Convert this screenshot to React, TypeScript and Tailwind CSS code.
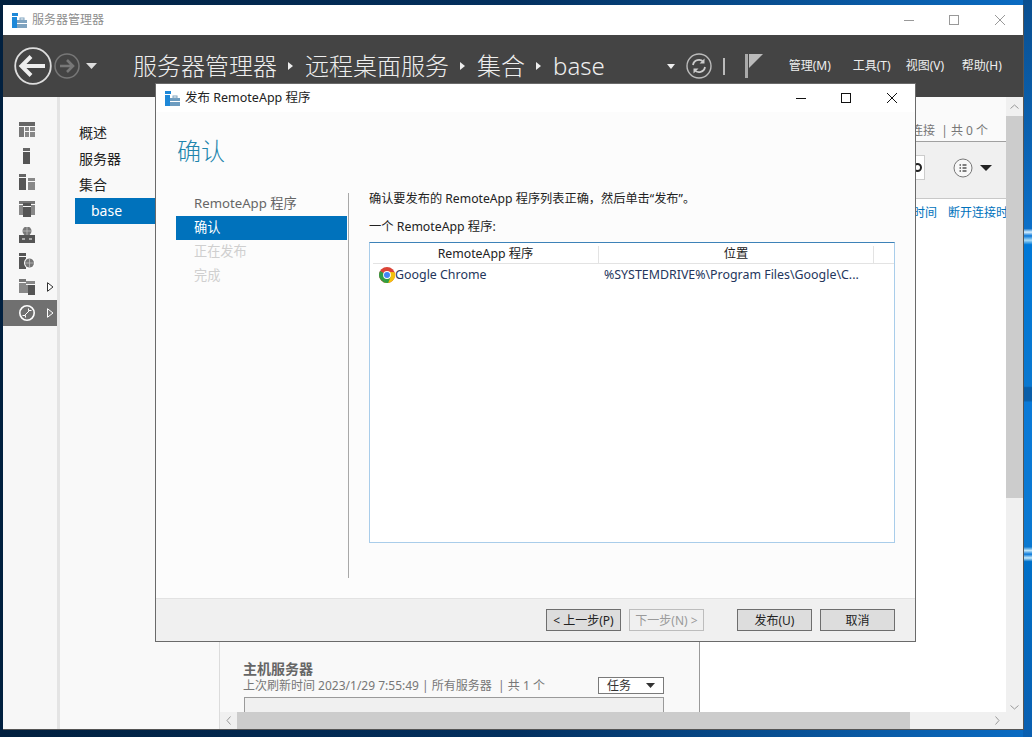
import { ReactNode } from 'react';

const font = 'font-["Noto_Sans","Noto_Sans_CJK_SC",sans-serif]';

function Icon({ children, w = 18, h = 18 }: { children: ReactNode; w?: number; h?: number }) {
  return (
    <svg width={w} height={h} viewBox={`0 0 ${w} ${h}`} className="block shrink-0">
      {children}
    </svg>
  );
}

function AppIcon({ light }: { light?: boolean }) {
  return (
    <Icon w={15} h={15}>
      <rect x="0" y="0" width="6" height="3" fill="#1e88d8" />
      <rect x="0" y="4" width="5" height="11" fill="#1e88d8" />
      <rect x="5" y="7" width="10" height="8" fill={light ? '#6d9cc0' : '#7fa3bf'} />
      <rect x="8" y="5" width="4" height="2" fill="none" stroke="#7fa3bf" />
      <rect x="5" y="10" width="10" height="1" fill="#fff" />
    </Icon>
  );
}

const navIcons: ReactNode[] = [
  <>
    <rect x="0" y="0" width="16" height="4" fill="#666" />
    <rect x="0" y="5" width="5" height="10" fill="#777" />
    <rect x="6" y="5" width="4" height="4" fill="#888" />
    <rect x="11" y="5" width="5" height="4" fill="#888" />
    <rect x="6" y="10" width="4" height="5" fill="#888" />
    <rect x="11" y="10" width="5" height="5" fill="#888" />
  </>,
  <>
    <rect x="4" y="0" width="7" height="3" fill="#666" />
    <rect x="4" y="4" width="7" height="12" fill="#555" />
  </>,
  <>
    <rect x="0" y="0" width="7" height="3" fill="#666" />
    <rect x="0" y="4" width="7" height="12" fill="#555" />
    <rect x="9" y="4" width="7" height="3" fill="#888" />
    <rect x="9" y="8" width="7" height="8" fill="#888" />
  </>,
  <>
    <rect x="0" y="0" width="16" height="3" fill="#777" />
    <rect x="0" y="4" width="4" height="10" fill="#888" />
    <rect x="12" y="4" width="4" height="10" fill="#888" />
    <rect x="4" y="2" width="8" height="3" fill="#555" />
    <rect x="4" y="6" width="8" height="10" fill="#555" />
  </>,
  <>
    <circle cx="8" cy="4" r="4.5" fill="#777" />
    <path d="M4 4h8M8 0v8" stroke="#bbb" strokeWidth="0.8" />
    <rect x="0" y="8" width="16" height="8" fill="#555" />
    <path d="M3 12h3M10 12h3" stroke="#fff" strokeWidth="1" />
  </>,
  <>
    <rect x="0" y="0" width="7" height="3" fill="#555" />
    <rect x="0" y="4" width="7" height="12" fill="#555" />
    <circle cx="10.5" cy="10" r="5.5" fill="#fff" />
    <circle cx="10.5" cy="10" r="4.5" fill="#777" />
    <path d="M6 10h9M10.5 6v8" stroke="#bbb" strokeWidth="0.8" />
  </>,
  <>
    <rect x="0" y="0" width="7" height="3" fill="#777" />
    <rect x="0" y="4" width="7" height="10" fill="#888" />
    <rect x="7" y="2" width="9" height="3" fill="#888" />
    <rect x="9" y="6" width="7" height="10" fill="#555" />
    <rect x="7" y="6" width="2" height="8" fill="#888" />
  </>,
];

function Triangle({ active }: { active?: boolean }) {
  return (
    <Icon w={7} h={10}>
      <path d="M0.5 0.7L6 5L0.5 9.3Z" fill={active ? '#777' : '#fff'} stroke={active ? '#fff' : '#333'} />
    </Icon>
  );
}

function Chevron() {
  return (
    <Icon w={5} h={8}>
      <path d="M0 0L5 4L0 8Z" fill="#eee" />
    </Icon>
  );
}

function CaptionButtons({ dark }: { dark?: boolean }) {
  const c = dark ? '#111' : '#999';
  return (
    <Icon w={101} h={14}>
      <path d="M0 7.5h10" stroke={c} />
      <rect x="45.5" y="2.5" width="9" height="9" fill="none" stroke={c} />
      <path d="M91 2l10 10M101 2L91 12" stroke={c} />
    </Icon>
  );
}

function Chrome() {
  return (
    <svg width="16" height="16" viewBox="0 0 16 16" className="block shrink-0">
      <circle cx="8" cy="8" r="8" fill="#db4437" />
      <path d="M8 8L1.1 4 A8 8 0 0 0 5 15.4Z" fill="#2f9e44" />
      <path d="M8 8L5 15.4 A8 8 0 0 0 15.5 5.2 L8 4.8Z" fill="#f4c20d" />
      <path d="M8 8L4.6 15.2 A8 8 0 0 0 9.2 15.9L11.5 10Z" fill="#2f9e44" />
      <circle cx="8" cy="8" r="3.9" fill="#fff" />
      <circle cx="8" cy="8" r="3" fill="#4285f4" />
    </svg>
  );
}

function Btn({ label, disabled }: { label: string; disabled?: boolean }) {
  return (
    <button
      className={`h-[22px] w-[75px] border pt-px text-[12px] leading-none ${
        disabled ? 'border-[#bdbdbd] bg-[#f0f0f0] text-[#9a9a9a]' : 'border-[#6e6e6e] bg-[#dddddd] text-[#222]'
      }`}
    >
      {label}
    </button>
  );
}

function Dialog() {
  const steps = [
    { t: 'RemoteApp 程序', c: 'text-[#666]' },
    { t: '确认', c: 'bg-[#0072bc] text-white' },
    { t: '正在发布', c: 'text-[#cfcfcf]' },
    { t: '完成', c: 'text-[#cfcfcf]' },
  ];
  return (
    <div className="absolute left-[155px] top-[83px] flex h-[559px] w-[761px] flex-col border border-[#6a6a6a] bg-[#fcfcfc]">
      <div className="flex h-[28px] shrink-0 items-center bg-white pl-[9px] pr-[18px]">
        <AppIcon light />
        <span className="ml-[5px] text-[12.5px] text-[#222]">发布 RemoteApp 程序</span>
        <div className="ml-auto">
          <CaptionButtons dark />
        </div>
      </div>
      <div className="flex min-h-0 flex-1 flex-col">
        <div className="h-[81px] shrink-0 pl-[21px] pt-[21px] text-[24px] font-light leading-[36px] text-[#1f86ad]">确认</div>
        <div className="flex h-[385px] shrink-0">
          <div className="w-[193px] shrink-0 border-r border-[#a8a8a8] pl-[20px]">
            <div className="-mt-px">
              {steps.map(s => (
                <div key={s.t} className={`flex h-[24px] w-[171px] items-center pl-[18px] text-[13.2px] ${s.c}`}>
                  {s.t}
                </div>
              ))}
            </div>
          </div>
          <div className="flex-1 pl-[20px] pr-[20px]">
            <div className="flex h-[13px] items-center text-[12.2px] text-[#222]">
              确认要发布的 RemoteApp 程序列表正确，然后单击“发布”。
            </div>
            <div className="mt-[14px] flex h-[14px] items-center text-[12.3px] text-[#222]">一个 RemoteApp 程序:</div>
            <div className="mt-[8px] h-[301px] border border-[#a9cdea] border-t-[#3d82b8] bg-white">
              <div className="ml-[3px] flex h-[21px] items-center border-b border-[#e3e3e3] pt-[2px] text-[12.3px] text-[#222]">
                <div className="flex h-[17px] w-[226px] items-center justify-center border-r border-[#e3e3e3]">
                  RemoteApp 程序
                </div>
                <div className="flex h-[17px] w-[275px] items-center justify-center border-r border-[#e3e3e3]">位置</div>
              </div>
              <div className="flex h-[22px] items-center text-[12.4px] text-[#24365c]">
                <div className="flex w-[234px] items-center pl-[9px]">
                  <Chrome />
                  <span>Google Chrome</span>
                </div>
                <span>%SYSTEMDRIVE%\Program Files\Google\C...</span>
              </div>
            </div>
          </div>
        </div>
        <div className="mt-auto flex h-[43px] shrink-0 items-center border-t border-[#e2e2e2] bg-[#f0f0f0] pr-[20px]">
          <div className="ml-auto flex gap-[8px]">
            <Btn label="< 上一步(P)" />
            <Btn label="下一步(N) >" disabled />
          </div>
          <div className="ml-[33px] flex gap-[8px]">
            <Btn label="发布(U)" />
            <Btn label="取消" />
          </div>
        </div>
      </div>
    </div>
  );
}

export default function App() {
  return (
    <div
      className={`relative h-[737px] w-[1032px] overflow-hidden bg-[linear-gradient(90deg,#01203f_0%,#03305f_50%,#0a5ba6_85%,#0a6cc4_100%)] pl-[3px] pt-[5px] ${font}`}
    >
      {/* wallpaper streaks on the right edge */}
      <div className="absolute right-0 top-0 h-full w-[9px] bg-[linear-gradient(180deg,#0a4f90_0%,#0b6fc8_31%,#d8f0ff_31.5%,#0b78d8_32%,#a8dcf8_32.6%,#0078d7_33.2%,#0a78d0_52.4%,#0a5ea8_52.6%,#0a5ea8_54.3%,#0a7ad8_54.6%,#0a78d0_74.2%,#bfe6fa_74.7%,#0a78d8_75.2%,#c6eafb_75.7%,#0070c8_76.2%,#0a5fb0_100%)]" />
      <div className="relative flex h-[725px] w-[1021px] flex-col border-b border-r border-[#555] bg-white">
        {/* title bar */}
        <div className="flex h-[30px] shrink-0 items-center pl-[9px] pr-[18px]">
          <AppIcon />
          <span className="ml-[5px] text-[12px] text-[#8e8e8e]">服务器管理器</span>
          <div className="ml-auto">
            <CaptionButtons />
          </div>
        </div>

        {/* dark command bar */}
        <div className="flex h-[62px] shrink-0 items-center bg-[#444444] pl-[11px] text-[#eee]">
          <Icon w={38} h={38}>
            <circle cx="19" cy="19" r="17.8" fill="none" stroke="#ddd" strokeWidth="1.8" />
            <path d="M7 19h24M17 9.5L7.5 19L17 28.5" fill="none" stroke="#eee" strokeWidth="4" />
          </Icon>
          <span className="ml-[2px]">
            <Icon w={26} h={26}>
              <circle cx="13" cy="13" r="12" fill="none" stroke="#777" strokeWidth="1.5" />
              <path d="M6 13h13M13 7l6 6l-6 6" fill="none" stroke="#777" strokeWidth="2.6" />
            </Icon>
          </span>
          <span className="ml-[6px]">
            <Icon w={11} h={6}>
              <path d="M0 0h11L5.5 6Z" fill="#ddd" />
            </Icon>
          </span>
          <div className="ml-[36px] flex items-center text-[24px] font-light leading-none">
            <span>服务器管理器</span>
            <span className="ml-[11px] mr-[12px]">
              <Chevron />
            </span>
            <span>远程桌面服务</span>
            <span className="ml-[11px] mr-[12px]">
              <Chevron />
            </span>
            <span>集合</span>
            <span className="ml-[11px] mr-[12px]">
              <Chevron />
            </span>
            <span>base</span>
          </div>
          <span className="ml-[62px]">
            <Icon w={8} h={5}>
              <path d="M0 0h8L4 5Z" fill="#eee" />
            </Icon>
          </span>
          <span className="ml-[11px]">
            <Icon w={26} h={26}>
              <circle cx="13" cy="13" r="12" fill="none" stroke="#bbb" strokeWidth="1.4" />
              <path d="M7 12a6 6 0 0 1 10.5-3M19 14a6 6 0 0 1-10.5 3" fill="none" stroke="#ccc" strokeWidth="1.8" />
              <path d="M18.5 5.5v5h-5ZM7.500 20.500v-5h5Z" fill="#ccc" />
            </Icon>
          </span>
          <span className="ml-[11px] h-[17px] w-[2px] bg-[#bbb]" />
          <span className="ml-[20px]">
            <Icon w={18} h={24}>
              <rect x="0" y="0" width="3" height="24" fill="#aaa" />
              <path d="M4 0h14L4 14Z" fill="#bbb" />
            </Icon>
          </span>
          <div className="ml-[26px] flex text-[12px] text-[#eee]">
            <span className="w-[64px]">管理(M)</span>
            <span className="w-[53px]">工具(T)</span>
            <span className="w-[56px]">视图(V)</span>
            <span>帮助(H)</span>
          </div>
        </div>

        {/* content */}
        <div className="flex min-h-0 flex-1">
          <div className="w-[54px] shrink-0 bg-[#f7f7f7] pt-[20px]">
            {navIcons.map((ic, i) => (
              <div key={i} className="flex h-[26.200px] items-center pl-[16px]">
                <Icon w={16} h={16}>
                  {ic}
                </Icon>
                {i === 6 && (
                  <span className="ml-[12px]">
                    <Triangle />
                  </span>
                )}
              </div>
            ))}
            <div className="flex h-[26px] items-center bg-[#707070] pl-[16px]">
              <Icon w={16} h={16}>
                <circle cx="8" cy="8" r="7.2" fill="none" stroke="#fff" strokeWidth="1.6" />
                <path d="M3.500 10.500h3v2M12.500 5.500h-3v-2M5 11l6-6" fill="none" stroke="#fff" strokeWidth="1" />
              </Icon>
              <span className="ml-[12px]">
                <Triangle active />
              </span>
            </div>
          </div>
          <div className="w-[3px] shrink-0 bg-[#e4e4e4]" />
          <div className="w-[160px] shrink-0 border-r border-[#dcdcdc] bg-[#f9f9f9] pl-[15px] pt-[23px] text-[14px] text-[#222]">
            <div className="pl-[4px] leading-[26px]">概述</div>
            <div className="pl-[4px] leading-[26px]">服务器</div>
            <div className="pl-[4px] leading-[26px]">集合</div>
            <div className="h-[26px] bg-[#0072bc] pl-[16px] leading-[26px] text-white">base</div>
          </div>

          <div className="flex min-w-0 flex-1 flex-col">
            <div className="flex min-h-0 flex-1">
              <div className="flex w-[480px] shrink-0 flex-col justify-end border-r border-[#9a9a9a] bg-[#f9f9f9] pl-[23px]">
                <div className="text-[14px] font-bold leading-[16px] text-[#666]">主机服务器</div>
                <div className="flex h-[17px] items-center">
                  <span className="w-[355px] text-[12px] leading-[16px] text-[#777]">
                    上次刷新时间 2023/1/29 7:55:49 | 所有服务器&nbsp; | 共 1 个
                  </span>
                  <div className="flex h-[17px] w-[66px] items-center justify-between border border-[#7a7a7a] bg-white pl-[8px] pr-[8px] text-[12px] text-[#333]">
                    任务
                    <Icon w={9} h={5}>
                      <path d="M0 0h9L4.500 5Z" fill="#333" />
                    </Icon>
                  </div>
                </div>
                <div className="mt-[3px] ml-px h-[15px] w-[420px] border border-b-0 border-[#9a9a9a] bg-[#f0f0f0]" />
              </div>
              <div className="flex min-w-0 flex-1 flex-col overflow-hidden bg-white">
                <div className="flex h-[45px] shrink-0 items-end justify-end border-b border-[#a0a0a0] bg-[#fafafa] pb-[1px] pr-[18px] text-[12px] text-[#777]">
                  连接 &nbsp;| 共 0 个
                </div>
                <div className="flex h-[57px] shrink-0 items-start border-b border-[#c8c8c8] bg-[#f0f0f0] pl-[125px] pt-[13px]">
                  <div className="flex h-[25px] w-[100px] items-center justify-end border border-[#ccc] bg-white pr-[2px]">
                    <span className="h-[9px] w-[9px] rounded-full border-2 border-[#222]" />
                  </div>
                  <span className="ml-[28px] mt-[3px]">
                    <Icon w={20} h={20}>
                      <circle cx="10" cy="10" r="9" fill="#f8f8f8" stroke="#777" />
                      <path d="M6.500 7h1.500M6.500 10h1.500M6.500 13h1.500M9.500 7h4M9.500 10h4M9.500 13h4" stroke="#555" strokeWidth="1.500" />
                    </Icon>
                  </span>
                  <span className="ml-[7px] mt-[10px]">
                    <Icon w={12} h={6}>
                      <path d="M0 0h12L6 6Z" fill="#222" />
                    </Icon>
                  </span>
                </div>
                <div className="flex h-[28px] shrink-0 items-center whitespace-nowrap pl-[213px] text-[12px] text-[#0072bc]">
                  <span>时间</span>
                  <span className="ml-[5px] h-[18px] w-px bg-[#e0e0e0]" />
                  <span className="ml-[6px]">断开连接时</span>
                </div>
              </div>
            </div>
            {/* horizontal scrollbar */}
            <div className="flex h-[17px] shrink-0 bg-[#f0f0f0]">
              <div className="flex w-[17px] items-center justify-center">
                <Icon w={5} h={9}>
                  <path d="M4.500 0.500L1 4.500L4.500 8.500" fill="none" stroke="#999" />
                </Icon>
              </div>
              <div className="w-[673px] bg-[#cccccc]" />
              <div className="ml-auto flex w-[17px] items-center justify-center">
                <Icon w={5} h={9}>
                  <path d="M0.500 0.500L4 4.500L0.500 8.500" fill="none" stroke="#999" />
                </Icon>
              </div>
            </div>
          </div>

          {/* vertical scrollbar */}
          <div className="flex w-[17px] shrink-0 flex-col bg-[#f0f0f0]">
            <div className="flex h-[19px] items-center justify-center">
              <Icon w={9} h={5}>
                <path d="M0.500 4.500L4.500 1L8.500 4.500" fill="none" stroke="#999" />
              </Icon>
            </div>
            <div className="h-[382px] bg-[#cccccc]" />
            <div className="mt-[202px] flex h-[14px] items-center justify-center">
              <Icon w={9} h={5}>
                <path d="M0.500 0.500L4.500 4L8.500 0.500" fill="none" stroke="#999" />
              </Icon>
            </div>
          </div>
        </div>
      </div>
      <Dialog />
    </div>
  );
}
